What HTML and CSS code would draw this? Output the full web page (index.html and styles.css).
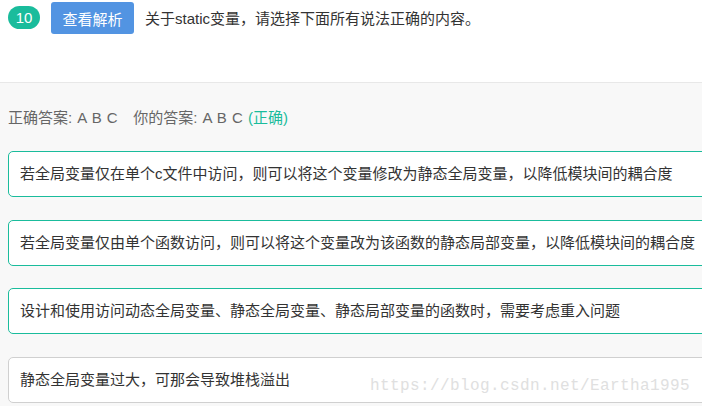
FILE: index.html
```html
<!DOCTYPE html>
<html lang="zh-CN">
<head>
    <meta charset="UTF-8">
    <meta name="viewport" content="width=device-width, initial-scale=1.0">
    <title>static变量</title>
    <link rel="stylesheet" href="styles.css">
</head>
<body>
    <div class="question">
        <span class="num">10</span>
        <button class="btn-analysis">查看解析</button>
        <span class="title">关于static变量，请选择下面所有说法正确的内容。</span>
    </div>

    <div class="result">
        <p class="answer">正确答案: A B C &nbsp; 你的答案: A B C <span class="ok">(正确)</span></p>

        <div class="option correct">若全局变量仅在单个c文件中访问，则可以将这个变量修改为静态全局变量，以降低模块间的耦合度</div>
        <div class="option correct">若全局变量仅由单个函数访问，则可以将这个变量改为该函数的静态局部变量，以降低模块间的耦合度</div>
        <div class="option correct">设计和使用访问动态全局变量、静态全局变量、静态局部变量的函数时，需要考虑重入问题</div>
        <div class="option">静态全局变量过大，可那会导致堆栈溢出</div>
    </div>

    <div class="watermark">https://blog.csdn.net/Eartha1995</div>
</body>
</html>
```

FILE: styles.css
```css
body{
    margin: 0;
    font-family: "Liberation Sans", "Noto Sans CJK SC", sans-serif;
    color: #333;
    background: #fff;
    overflow: hidden;
    position: relative;
    height: 406px;
    display: flex;
    flex-direction: column;
}

.question{
    display: flex;
    align-items: center;
    height: 36px;
    padding: 0 8px;
    margin-bottom: 46px;
    flex-shrink: 0;
}

.num{
    display: inline-block;
    width: 32px;
    height: 23px;
    line-height: 23px;
    border-radius: 12px;
    background: #1abc9c;
    color: #fff;
    font-size: 15px;
    text-align: center;
    margin-top: -2px;
}

.btn-analysis{
    margin-left: 11px;
    width: 83px;
    height: 32px;
    border: none;
    border-radius: 3px;
    background: #5294e2;
    color: #fff;
    font-family: "Liberation Sans", "Noto Sans CJK SC", sans-serif;
    font-size: 15px;
    padding: 0;
}

.title{
    margin-left: 11px;
    font-size: 15px;
    margin-top: -2px;
}

.result{
    flex: 1;
    min-height: 0;
    overflow: hidden;
    background: #f8f8f8;
    border-top: 1px solid #e8e8e8;
    padding: 25px 8px 0;
}

.answer{
    margin: 0 0 23px;
    font-size: 15px;
    line-height: 20px;
    color: #666;
    word-spacing: 1px;
}

.ok{
    color: #1abc9c;
}

.option{
    width: 720px;
    height: 44px;
    line-height: 44px;
    padding: 0 11px;
    margin-bottom: 22.5px;
    background: #fff;
    border: 1px solid #d0d0d0;
    border-radius: 5px;
    font-size: 15px;
    color: #333;
    white-space: nowrap;
}

.option.correct{
    border-color: #1abc9c;
}

.watermark{
    position: absolute;
    left: 370px;
    top: 377px;
    font-family: "Liberation Mono", monospace;
    font-size: 16px;
    letter-spacing: 0.4px;
    color: #e0e0e0;
}
```
